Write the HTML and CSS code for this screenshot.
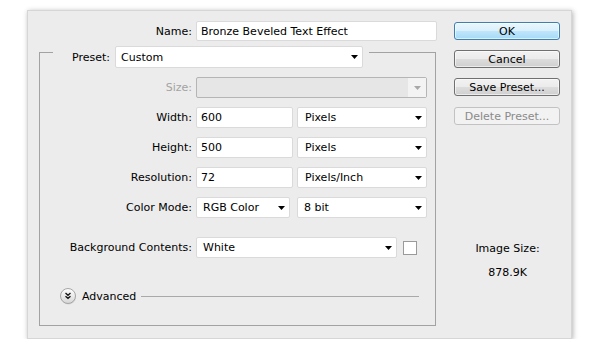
FILE: index.html
```html
<!DOCTYPE html>
<html>
<head>
<meta charset="utf-8">
<title>New</title>
<link rel="stylesheet" href="styles.css">
</head>
<body>
<div class="dialog">
  <div class="main">
    <div class="name-row">
      <span class="lbl name-lbl">Name:</span>
      <div class="field name-field">Bronze Beveled Text Effect</div>
    </div>
    <div class="group">
      <div class="group-head">
        <span class="head-lbl">Preset:</span>
        <div class="field select preset">Custom<svg class="arrow" width="7" height="4" viewBox="0 0 7 4"><polygon points="0,0 7,0 3.5,4" fill="#000"/></svg></div>
      </div>
      <div class="rows">
        <div class="row">
          <span class="lbl dis">Size:</span>
          <div class="field select disabled w-full"><span class="dis-arrow"><svg width="7" height="4" viewBox="0 0 7 4"><polygon points="0,0 7,0 3.5,4" fill="#a8a8a8"/></svg></span></div>
        </div>
        <div class="row">
          <span class="lbl">Width:</span>
          <div class="field w-num">600</div>
          <div class="field select w-unit">Pixels<svg class="arrow" width="7" height="4" viewBox="0 0 7 4"><polygon points="0,0 7,0 3.5,4" fill="#000"/></svg></div>
        </div>
        <div class="row">
          <span class="lbl">Height:</span>
          <div class="field w-num">500</div>
          <div class="field select w-unit">Pixels<svg class="arrow" width="7" height="4" viewBox="0 0 7 4"><polygon points="0,0 7,0 3.5,4" fill="#000"/></svg></div>
        </div>
        <div class="row">
          <span class="lbl">Resolution:</span>
          <div class="field w-num">72</div>
          <div class="field select w-unit">Pixels/Inch<svg class="arrow" width="7" height="4" viewBox="0 0 7 4"><polygon points="0,0 7,0 3.5,4" fill="#000"/></svg></div>
        </div>
        <div class="row">
          <span class="lbl">Color Mode:</span>
          <div class="field select w-mode">RGB Color<svg class="arrow" width="7" height="4" viewBox="0 0 7 4"><polygon points="0,0 7,0 3.5,4" fill="#000"/></svg></div>
          <div class="field select w-bit">8 bit<svg class="arrow" width="7" height="4" viewBox="0 0 7 4"><polygon points="0,0 7,0 3.5,4" fill="#000"/></svg></div>
        </div>
        <div class="row bg-row">
          <span class="lbl">Background Contents:</span>
          <div class="field select w-bg">White<svg class="arrow" width="7" height="4" viewBox="0 0 7 4"><polygon points="0,0 7,0 3.5,4" fill="#000"/></svg></div>
          <span class="swatch"></span>
        </div>
      </div>
      <div class="advanced">
        <svg class="adv-icon" width="17" height="17" viewBox="0 0 17 17">
          <defs>
            <linearGradient id="g" x1="0" y1="0" x2="0" y2="1">
              <stop offset="0" stop-color="#ffffff"/>
              <stop offset="1" stop-color="#d6d6d6"/>
            </linearGradient>
          </defs>
          <circle cx="8.5" cy="9" r="7.5" fill="#c8c8c8" opacity="0.6"/>
          <circle cx="8" cy="8" r="7.5" fill="url(#g)" stroke="#a6a6a6" stroke-width="1"/>
          <path d="M5.5 5 L8 7.2 L10.5 5 M5.5 8.2 L8 10.4 L10.5 8.2" fill="none" stroke="#1a1a1a" stroke-width="1.4"/>
        </svg>
        <span class="adv-text">Advanced</span>
        <span class="adv-line"></span>
      </div>
    </div>
  </div>
  <div class="side">
    <div class="btn ok">OK</div>
    <div class="btn">Cancel</div>
    <div class="btn">Save Preset...</div>
    <div class="btn disabled-btn">Delete Preset...</div>
    <div class="img-size">
      <div>Image Size:</div>
      <div class="img-val">878.9K</div>
    </div>
  </div>
</div>
</body>
</html>
```

FILE: styles.css
```css
* { box-sizing: border-box; }

html, body {
  margin: 0;
  padding: 0;
  background: #ffffff;
}

body {
  font-family: "DejaVu Sans", "Noto Sans", sans-serif;
  font-size: 11px;
  color: #000;
}

.dialog {
  margin: 10px 0 0 27px;
  width: 545px;
  height: 329px;
  background: #ececec;
  border: 1px solid #d6d6d6;
  box-shadow: 1px 1px 5px rgba(0, 0, 0, 0.3);
  display: flex;
  gap: 17px;
  padding: 10px 0 0 11px;
}

.main {
  width: 398px;
  display: flex;
  flex-direction: column;
}

.lbl {
  width: 152px;
  text-align: right;
  white-space: nowrap;
}

.dis { color: #a3a3a3; }

.name-row {
  display: flex;
  align-items: center;
  gap: 4px;
  height: 20px;
}

.name-lbl { width: 153px; }

.field {
  height: 21px;
  background: #ffffff;
  border: 1px solid #dadada;
  border-radius: 2px;
  display: flex;
  align-items: center;
  padding-left: 4px;
  white-space: nowrap;
}

.name-field {
  width: 241px;
  height: 20px;
}

.select {
  position: relative;
  justify-content: space-between;
  padding-right: 4px;
}

.select .arrow { flex: none; }

.group {
  margin-top: 11px;
  width: 397px;
  height: 274px;
  border: 1px solid #a2a2a2;
  display: flex;
  flex-direction: column;
}

.group-head {
  margin: -7px 0 0 13px;
  width: 316px;
  height: 22px;
  background: #ececec;
  display: flex;
  align-items: center;
  justify-content: flex-end;
  gap: 5px;
  padding-right: 6px;
}

.preset {
  width: 248px;
  height: 22px;
  padding-left: 5px;
}

.rows {
  margin-top: 9px;
  display: flex;
  flex-direction: column;
  gap: 9px;
}

.row {
  display: flex;
  align-items: center;
  gap: 4px;
  height: 21px;
}

.w-full {
  width: 231px;
}

.disabled {
  background: #e6e6e6;
  border-color: #b5b5b5;
  padding: 0;
  justify-content: flex-end;
}

.dis-arrow {
  width: 18px;
  height: 19px;
  background: #f3f3f3;
  display: flex;
  align-items: center;
  justify-content: center;
}

.w-num {
  width: 97px;
}

.w-unit {
  width: 130px;
  padding-left: 7px;
}

.w-mode {
  width: 94px;
  padding-left: 6px;
}

.w-bit {
  margin-left: 3px;
  width: 130px;
  padding-left: 6px;
}

.bg-row {
  margin-top: 10px;
}

.w-bg {
  width: 201px;
  padding-left: 6px;
}

.swatch {
  margin-left: 2px;
  width: 14px;
  height: 14px;
  background: #fff;
  border: 1px solid #9a9a9a;
}

.advanced {
  margin-top: 30px;
  display: flex;
  align-items: center;
  height: 17px;
  padding-left: 20px;
  padding-right: 16px;
}

.adv-icon { flex: none; }

.adv-text {
  margin-left: 5px;
  font-size: 11px;
}

.adv-line {
  flex: 1;
  margin-left: 5px;
  height: 1px;
  background: #a9a9a9;
}

.side {
  width: 106px;
  padding-top: 1px;
  display: flex;
  flex-direction: column;
  gap: 10px;
}

.btn {
  height: 18px;
  border: 1px solid #707070;
  border-radius: 3px;
  background: linear-gradient(#f2f2f2 0%, #ebebeb 50%, #dddddd 51%, #cfcfcf 100%);
  display: flex;
  align-items: center;
  justify-content: center;
  box-shadow: inset 0 0 0 1px rgba(255, 255, 255, 0.6);
}

.ok {
  border-color: #3c7fb1;
  background: linear-gradient(#eaf6fd 0%, #d9f0fc 50%, #bee6fd 51%, #a7d9f5 100%);
}

.disabled-btn {
  margin-top: 1px;
  border-color: #c2c2c2;
  background: #f2f2f2;
  color: #8a8a8a;
  box-shadow: none;
}

.img-size {
  margin-top: 107px;
  text-align: center;
  line-height: 13px;
  padding-left: 1px;
}

.img-val {
  margin-top: 11px;
}
```
